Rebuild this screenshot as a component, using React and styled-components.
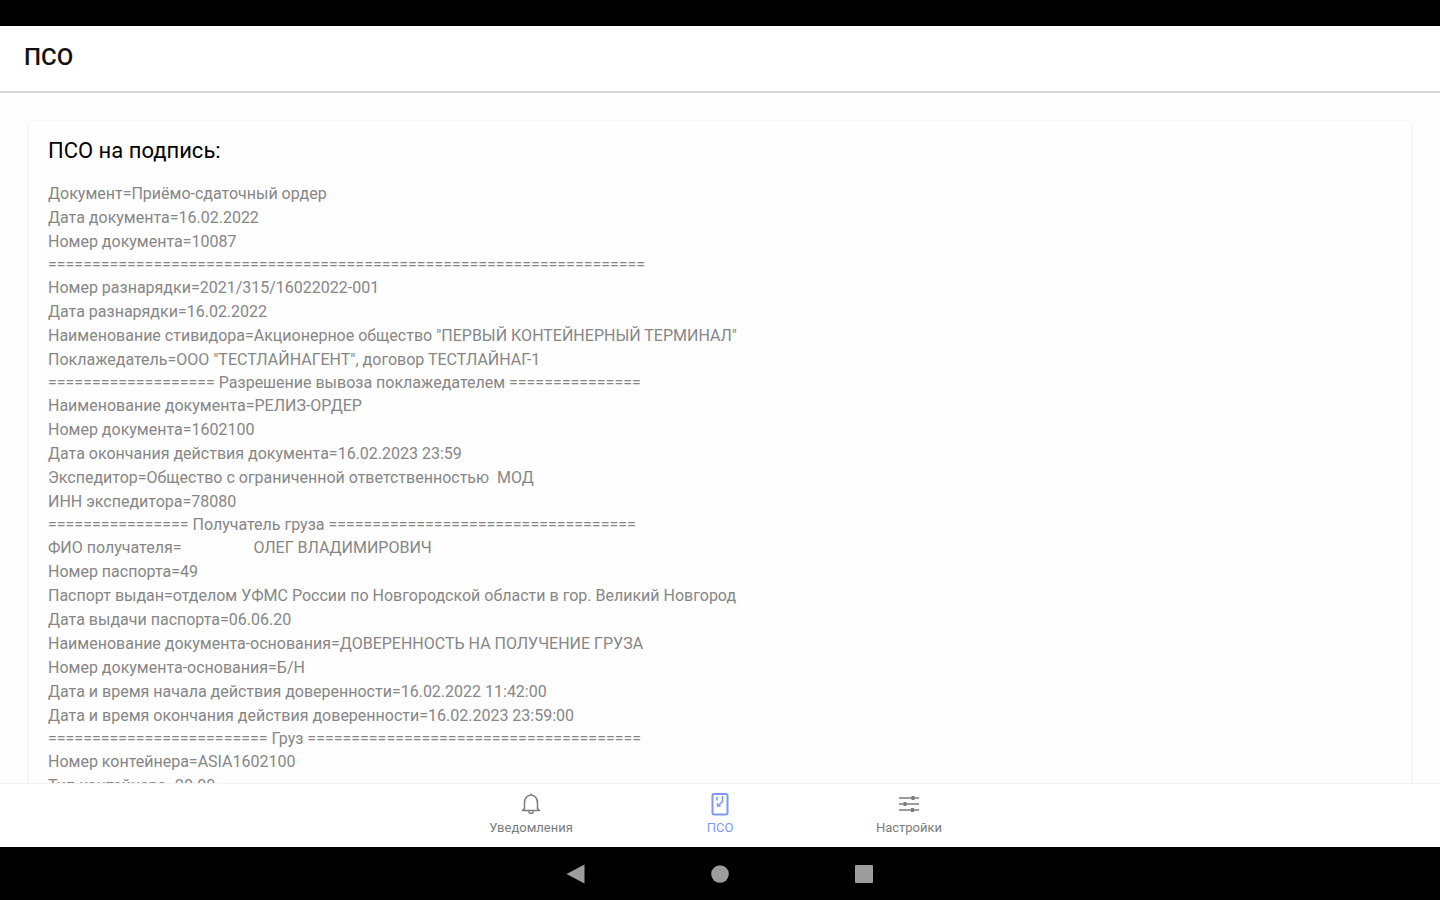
import React from "react";
import styled, { createGlobalStyle } from "styled-components";

const GlobalStyle = createGlobalStyle`
  * { box-sizing: border-box; }
  body {
    margin: 0;
    background: #fff;
    font-family: Roboto, "Noto Sans", sans-serif;
  }
`;

const Screen = styled.div`
  display: flex;
  flex-direction: column;
  height: 100vh;
  background: #fefefe;
`;

const StatusBar = styled.div`
  flex: none;
  height: 26px;
  background: #000;
`;

const Header = styled.header`
  flex: none;
  display: flex;
  align-items: center;
  height: 67px;
  padding: 0 24px 4px;
  background: #fff;
  border-bottom: 2px solid #d8d8d8;
`;

const HeaderTitle = styled.h1`
  margin: 0;
  font-size: 24px;
  line-height: 32px;
  font-weight: 500;
  color: #111;
`;

const Content = styled.main`
  flex: 1;
  min-height: 0;
  overflow-y: auto;
  scrollbar-width: none;
  padding: 28px 29px;
`;

const Card = styled.article`
  padding: 14px 19px;
  background: #fefefe;
  border-radius: 4px;
  box-shadow: 0 1px 4px rgba(0, 0, 0, 0.1);
`;

const CardTitle = styled.h2`
  margin: 0 0 15px;
  font-size: 22px;
  line-height: 32px;
  font-weight: 400;
  color: #000;
`;

const Line = styled.p`
  margin: 0;
  font-size: 16px;
  line-height: ${(p) => (p.$divider ? 22 : 24)}px;
  color: #868686;
  white-space: pre;
`;

const HiddenName = styled.span`
  display: inline-block;
  width: 72px;
`;

const TabBar = styled.nav`
  flex: none;
  display: flex;
  justify-content: center;
  height: 64px;
  background: #fff;
  border-top: 1px solid #f2f2f2;
`;

const Tab = styled.button`
  display: flex;
  flex-direction: column;
  align-items: center;
  gap: 4px;
  width: 189px;
  padding: 8px 0 0;
  border: 0;
  background: none;
  font-family: inherit;
  font-size: 13px;
  line-height: 16px;
  color: ${(p) => (p.$active ? "#8098f8" : "#7c7c7c")};
  cursor: pointer;
`;

const SystemBar = styled.div`
  flex: none;
  display: flex;
  justify-content: center;
  height: 53px;
  background: #000;
`;

const SystemButton = styled.button`
  display: flex;
  align-items: center;
  justify-content: center;
  width: 10%;
  padding: 0;
  border: 0;
  background: none;
  color: #9d9d9d;
  cursor: pointer;
`;

const eq = (n) => "=".repeat(n);

const lines = [
  { text: "Документ=Приёмо-сдаточный ордер" },
  { text: "Дата документа=16.02.2022" },
  { text: "Номер документа=10087" },
  { text: eq(68), divider: true },
  { text: "Номер разнарядки=2021/315/16022022-001" },
  { text: "Дата разнарядки=16.02.2022" },
  { text: 'Наименование стивидора=Акционерное общество "ПЕРВЫЙ КОНТЕЙНЕРНЫЙ ТЕРМИНАЛ"' },
  { text: 'Поклажедатель=ООО "ТЕСТЛАЙНАГЕНТ", договор ТЕСТЛАЙНАГ-1' },
  { text: `${eq(19)} Разрешение вывоза поклажедателем ${eq(15)}`, divider: true },
  { text: "Наименование документа=РЕЛИЗ-ОРДЕР" },
  { text: "Номер документа=1602100" },
  { text: "Дата окончания действия документа=16.02.2023 23:59" },
  { text: "Экспедитор=Общество с ограниченной ответственностью  МОД" },
  { text: "ИНН экспедитора=78080" },
  { text: `${eq(16)} Получатель груза ${eq(35)}`, divider: true },
  { text: "ФИО получателя=", after: "ОЛЕГ ВЛАДИМИРОВИЧ" },
  { text: "Номер паспорта=49" },
  { text: "Паспорт выдан=отделом УФМС России по Новгородской области в гор. Великий Новгород" },
  { text: "Дата выдачи паспорта=06.06.20" },
  { text: "Наименование документа-основания=ДОВЕРЕННОСТЬ НА ПОЛУЧЕНИЕ ГРУЗА" },
  { text: "Номер документа-основания=Б/Н" },
  { text: "Дата и время начала действия доверенности=16.02.2022 11:42:00" },
  { text: "Дата и время окончания действия доверенности=16.02.2023 23:59:00" },
  { text: `${eq(25)} Груз ${eq(38)}`, divider: true },
  { text: "Номер контейнера=ASIA1602100" },
  { text: "Тип контейнера=20.00" },
];

const BellIcon = () => (
  <svg width="24" height="24" viewBox="0 0 24 24" fill="none" stroke="currentColor" strokeWidth="1.5" strokeLinejoin="round" aria-hidden="true">
    <path d="M12 1.5v1.5M5.500 16.500V11c0-4.500 2.800-8 6.500-8s6.500 3.500 6.500 8v5.500l2 2H3.500zM9.500 19.500a2.600 2.600 0 0 0 5 0" />
  </svg>
);

const DocumentIcon = () => (
  <svg width="24" height="24" viewBox="0 0 24 24" fill="none" stroke="currentColor" strokeWidth="2" strokeLinejoin="round" aria-hidden="true">
    <rect x="4.500" y="2" width="15" height="20.500" rx="1.500" />
    <path d="M9 5v3.500M14.500 4v5.500l-4 4M9.500 11v3h3" strokeWidth="1.500" />
  </svg>
);

const SettingsIcon = () => (
  <svg width="24" height="24" viewBox="0 0 24 24" fill="none" stroke="currentColor" strokeWidth="1.500" aria-hidden="true">
    <path d="M2 6h20M2 12h20M2 18h20" />
    <path d="M16 4v4M8 10v4M15.500 16v4" strokeWidth="3" />
  </svg>
);

const tabs = [
  { label: "Уведомления", Icon: BellIcon },
  { label: "ПСО", Icon: DocumentIcon, active: true },
  { label: "Настройки", Icon: SettingsIcon },
];

export default function App() {
  return (
    <Screen>
      <GlobalStyle />
      <StatusBar />
      <Header>
        <HeaderTitle>ПСО</HeaderTitle>
      </Header>
      <Content>
        <Card>
          <CardTitle>ПСО на подпись:</CardTitle>
          {lines.map((line) => (
            <Line key={line.text} $divider={line.divider}>
              {line.text}
              {line.after && <HiddenName />}
              {line.after}
            </Line>
          ))}
        </Card>
      </Content>
      <TabBar>
        {tabs.map(({ label, Icon, active }) => (
          <Tab key={label} type="button" $active={active} aria-current={active ? "page" : undefined}>
            <Icon />
            {label}
          </Tab>
        ))}
      </TabBar>
      <SystemBar>
        <SystemButton type="button" aria-label="Назад">
          <svg width="20" height="20" viewBox="0 0 20 20" fill="currentColor"><path d="M18.500 0.500v19L0.500 10z" /></svg>
        </SystemButton>
        <SystemButton type="button" aria-label="Домой">
          <svg width="20" height="20" viewBox="0 0 20 20" fill="currentColor"><circle cx="10" cy="10" r="8.800" /></svg>
        </SystemButton>
        <SystemButton type="button" aria-label="Недавние">
          <svg width="20" height="20" viewBox="0 0 20 20" fill="currentColor"><rect x="1" y="1" width="18" height="18" rx="1" /></svg>
        </SystemButton>
      </SystemBar>
    </Screen>
  );
}
